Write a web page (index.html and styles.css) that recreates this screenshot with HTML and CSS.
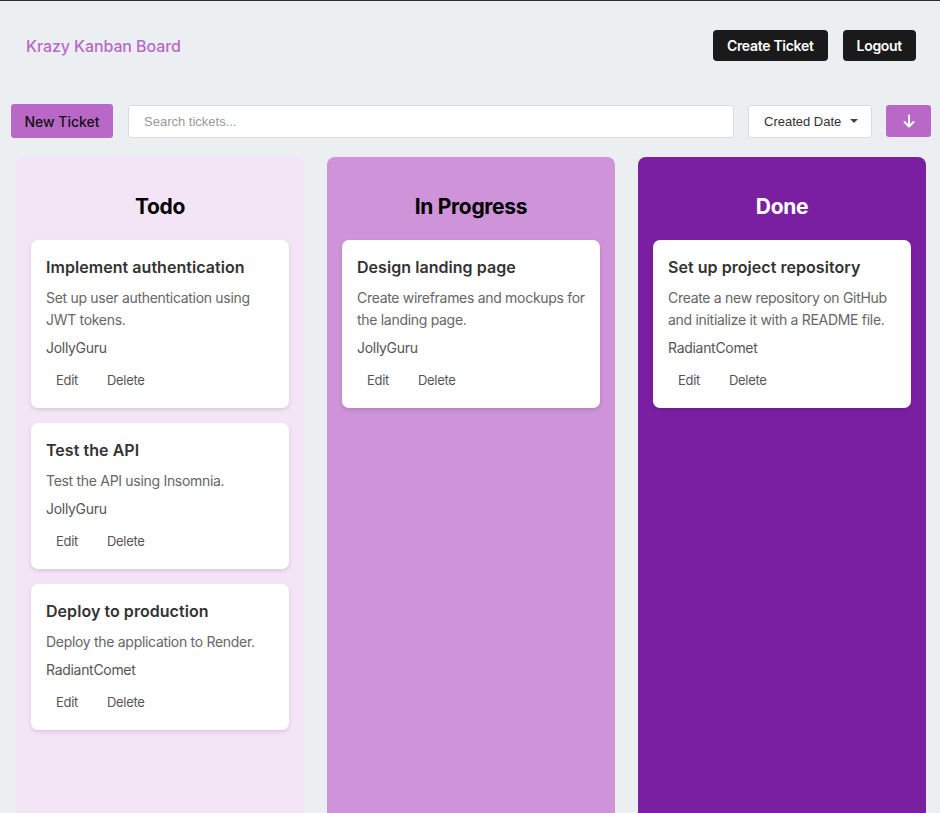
FILE: index.html
```html
<!DOCTYPE html>
<html lang="en">
<head>
<meta charset="utf-8">
<title>Krazy Kanban Board</title>
<link rel="stylesheet" href="styles.css">
</head>
<body>
<header class="topbar">
  <h1 class="brand">Krazy Kanban Board</h1>
  <nav class="top-actions">
    <button class="dark-btn">Create Ticket</button>
    <button class="dark-btn">Logout</button>
  </nav>
</header>

<section class="toolbar">
  <button class="new-btn">New Ticket</button>
  <input class="search" type="text" placeholder="Search tickets...">
  <div class="select">
    <span>Created Date</span>
    <svg class="caret" width="8" height="4" viewBox="0 0 8 4"><path d="M0 0h8L4 4z" fill="#444"/></svg>
  </div>
  <button class="sort-btn" aria-label="sort">
    <svg width="14" height="14" viewBox="0 0 14 14" fill="none" stroke="#fff" stroke-width="2" stroke-linecap="round" stroke-linejoin="round"><path d="M7 1.5v11M2.5 8l4.5 4.5L11.5 8"/></svg>
  </button>
</section>

<main class="board">
  <div class="column todo">
    <h2>Todo</h2>
    <div class="card">
      <h3>Implement authentication</h3>
      <p class="desc">Set up user authentication using JWT tokens.</p>
      <p class="author">JollyGuru</p>
      <div class="card-actions"><button>Edit</button><button>Delete</button></div>
    </div>
    <div class="card">
      <h3>Test the API</h3>
      <p class="desc">Test the API using Insomnia.</p>
      <p class="author">JollyGuru</p>
      <div class="card-actions"><button>Edit</button><button>Delete</button></div>
    </div>
    <div class="card">
      <h3>Deploy to production</h3>
      <p class="desc">Deploy the application to Render.</p>
      <p class="author">RadiantComet</p>
      <div class="card-actions"><button>Edit</button><button>Delete</button></div>
    </div>
  </div>
  <div class="column progress">
    <h2>In Progress</h2>
    <div class="card">
      <h3>Design landing page</h3>
      <p class="desc">Create wireframes and mockups for the landing page.</p>
      <p class="author">JollyGuru</p>
      <div class="card-actions"><button>Edit</button><button>Delete</button></div>
    </div>
  </div>
  <div class="column done">
    <h2>Done</h2>
    <div class="card">
      <h3>Set up project repository</h3>
      <p class="desc">Create a new repository on GitHub and initialize it with a README file.</p>
      <p class="author">RadiantComet</p>
      <div class="card-actions"><button>Edit</button><button>Delete</button></div>
    </div>
  </div>
</main>
</body>
</html>
```

FILE: styles.css
```css
* { box-sizing: border-box; }

html, body {
  margin: 0;
  padding: 0;
  height: 100%;
  overflow: hidden;
}

body {
  background: #eceff1;
  font-family: Inter, "Noto Sans", sans-serif;
  color: #222;
  border-top: 1px solid #2b2b2b;
}

.topbar {
  display: flex;
  justify-content: space-between;
  align-items: flex-start;
  padding: 29px 24px 0 26px;
  height: 91px;
}

.brand {
  margin: 6px 0 0;
  font-size: 16px;
  font-weight: 500;
  color: #ba68c8;
  letter-spacing: -0.1px;
  line-height: 20px;
}

.top-actions {
  display: flex;
  gap: 15px;
}

.dark-btn {
  background: #1a1a1a;
  color: #fff;
  border: none;
  border-radius: 4px;
  height: 31px;
  padding: 0 14px;
  font-family: inherit;
  font-size: 14px;
  font-weight: 600;
  letter-spacing: -0.3px;
}

.toolbar {
  display: flex;
  align-items: center;
  gap: 14px;
  padding: 12px 9px 0 11px;
}

.new-btn {
  background: #ba68c8;
  color: #111;
  border: none;
  border-radius: 3px;
  height: 34px;
  width: 102px;
  font-family: inherit;
  font-size: 14px;
  font-weight: 500;
  margin-right: 1px;
}

.search {
  flex: 1;
  height: 33px;
  border: 1px solid #dcdcdc;
  border-radius: 3px;
  background: #fff;
  padding: 0 15px;
  font-family: "Liberation Sans", Arial, sans-serif;
  font-size: 13px;
  color: #333;
  outline: none;
}
.search::placeholder { color: #999; }

.select {
  width: 124px;
  height: 33px;
  background: #fff;
  border: 1px solid #dcdcdc;
  border-radius: 3px;
  display: flex;
  align-items: center;
  justify-content: space-between;
  padding: 0 13px 0 15px;
  font-family: "Liberation Sans", Arial, sans-serif;
  font-size: 13px;
  color: #333;
}
.caret { display: block; }

.sort-btn {
  width: 45px;
  height: 32px;
  border: none;
  border-radius: 3px;
  background: #ba68c8;
  display: flex;
  align-items: center;
  justify-content: center;
  padding: 0;
}

.board {
  display: grid;
  grid-template-columns: repeat(3, 288px);
  gap: 23px;
  padding: 19px 14px 0 16px;
}

.column {
  border-radius: 8px;
  padding: 15px 15px 20px;
  min-height: 700px;
}
.column h2 {
  text-align: center;
  margin: 22px 0 20px;
  font-size: 21px;
  font-weight: 700;
  line-height: 26px;
  letter-spacing: -0.3px;
  color: #000;
}
.todo { background: #f3e5f5; }
.progress { background: #ce93d8; }
.done { background: #7b1fa2; }
.done h2 { color: #fff; }

.card {
  background: #fff;
  border-radius: 7px;
  box-shadow: 0 2px 4px rgba(0, 0, 0, 0.12);
  padding: 15px 15px 15px;
  margin-bottom: 15px;
}

.card h3 {
  margin: 0 0 8px;
  font-size: 16px;
  font-weight: 600;
  line-height: 24px;
  color: #333;
  letter-spacing: 0.05px;
}

.desc {
  margin: 0 0 6px;
  font-size: 14px;
  line-height: 22px;
  color: #666;
  letter-spacing: -0.3px;
}

.author {
  margin: 0 0 8px;
  font-size: 14px;
  line-height: 22px;
  color: #555;
  letter-spacing: -0.3px;
}

.card-actions {
  display: flex;
  gap: 9px;
}
.card-actions button {
  background: transparent;
  border: none;
  padding: 4px 10px;
  font-family: inherit;
  font-size: 13px;
  line-height: 18px;
  color: #555;
  letter-spacing: -0.3px;
}
```
